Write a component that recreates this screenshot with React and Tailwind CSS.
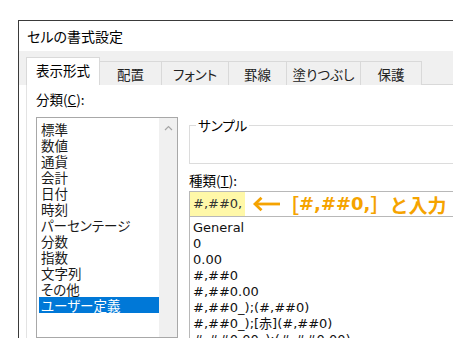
import React from "react";

const font = { fontFamily: '"Noto Sans CJK JP", "Noto Sans", sans-serif' };
const latin = { fontFamily: '"DejaVu Sans", "Noto Sans CJK JP", sans-serif' };

const categories = [
  "標準",
  "数値",
  "通貨",
  "会計",
  "日付",
  "時刻",
  "パーセンテージ",
  "分数",
  "指数",
  "文字列",
  "その他",
  "ユーザー定義",
];

const formats = [
  "General",
  "0",
  "0.00",
  "#,##0",
  "#,##0.00",
  "#,##0_);(#,##0)",
  "#,##0_);[赤](#,##0)",
  "#,##0.00_);(#,##0.00)",
];

const tabs = [
  { label: "表示形式", w: "w-[74px]" },
  { label: "配置", w: "w-[62px]" },
  { label: "フォント", w: "w-[67px]" },
  { label: "罫線", w: "w-[58px]" },
  { label: "塗りつぶし", w: "w-[74px]" },
  { label: "保護", w: "w-[61px]" },
];

export default function App() {
  return (
    <div
      className="w-[458px] h-[344px] bg-white pt-[20px] pl-[18px] overflow-hidden text-[13px] text-[#1a1a1a] [font-feature-settings:'palt']"
      style={font}
    >
      <div className="w-[435px] h-[318px] border-l border-t border-[#3a3a3a] bg-white flex flex-col overflow-hidden">
        {/* title */}
        <div className="h-[30px] flex items-center pl-[8px] text-[14px] text-black shrink-0">
          セルの書式設定
        </div>
        {/* tabs */}
        <div className="h-[34px] bg-[#f0f0f0] flex items-end pl-[7px] shrink-0">
          {tabs.map((t, i) =>
            i === 0 ? (
              <div
                key={t.label}
                className={`${t.w} h-[28px] bg-white border-t border-l border-r border-[#d9d9d9] flex items-center justify-center text-[13.5px] text-black leading-none pb-[2px]`}
              >
                {t.label}
              </div>
            ) : (
              <div
                key={t.label}
                className={`${t.w} h-[24px] bg-[#f0f0f0] border-t border-r border-[#d9d9d9] flex items-center justify-center text-[13.5px] text-[#222] leading-none pt-[2px]`}
              >
                {t.label}
              </div>
            )
          )}
          <div className="flex-1 h-[1px] bg-[#d9d9d9]" />
        </div>
        {/* panel */}
        <div className="flex-1 flex bg-white min-h-0">
          <div className="w-[7px] shrink-0" />
          <div className="flex-1 bg-white border-l border-[#e3e3e3] flex items-start pl-[9px] min-h-0 overflow-hidden">
            {/* left column */}
            <div className="w-[142px] shrink-0 flex flex-col pt-[6px] h-full">
              <div className="leading-[16px] text-[13.5px] text-black">
                分類(<span className="underline">C</span>):
              </div>
              <div className="mt-[10px] flex-1 border border-[#a8a8a8] flex">
                <div className="flex-1 pt-[3px] pl-[2px]">
                  {categories.map((c, i) => (
                    <div
                      key={c}
                      className={`h-[16px] leading-[16px] pl-[2px] whitespace-nowrap text-[13.5px] ${
                        i === categories.length - 1
                          ? "bg-[#0078d7] text-white"
                          : "text-[#1a1a1a]"
                      }`}
                    >
                      {c}
                    </div>
                  ))}
                </div>
                <div className="w-[18px] bg-[#f0f0f0] flex justify-center pt-[7px]">
                  <svg width="9" height="6" viewBox="0 0 9 6">
                    <path d="M1 5 L4.5 1.5 L8 5" fill="none" stroke="#a6a6a6" strokeWidth="1.2" />
                  </svg>
                </div>
              </div>
            </div>
            {/* right column */}
            <div className="ml-[11px] w-[300px] shrink-0 flex flex-col pt-[32px]">
              <fieldset className="border border-[#dcdcdc] h-[47px]">
                <legend className="ml-[6px] px-[2px] leading-[16px] text-[13.5px] text-black">
                  サンプル
                </legend>
              </fieldset>
              <div className="mt-[8px] leading-[16px] text-[13.5px] text-black">
                種類(<span className="underline">T</span>):
              </div>
              <div className="mt-[3px] h-[25px] border border-[#b8b8b8] border-b-0 flex items-stretch">
                <div
                  className="bg-[#fff8a8] w-[55px] flex items-center pl-[3px] text-[13px] text-[#333]"
                  style={latin}
                >
                  #,##0,
                </div>
                <div className="flex items-center pl-[7px] text-[#f5a300] font-bold text-[19px] whitespace-nowrap leading-none [font-feature-settings:normal]">
                  <svg width="28" height="16" viewBox="0 0 28 16" className="shrink-0">
                    <path d="M3 8 H28" stroke="#f5a300" strokeWidth="2.8" />
                    <path d="M9.5 1.8 L3 8 L9.5 14.2" fill="none" stroke="#f5a300" strokeWidth="2.8" />
                  </svg>
                  <span>［</span>
                  <span className="text-[18px]" style={latin}>#,##0,</span>
                  <span>］</span>
                  <span>と入力</span>
                </div>
              </div>
              <div className="border border-[#b8b8b8] pt-[3px] pl-[3px] h-[200px]">
                {formats.map((f) => (
                  <div
                    key={f}
                    className="h-[16px] leading-[16px] whitespace-nowrap text-[13px] text-[#111]"
                    style={latin}
                  >
                    {f}
                  </div>
                ))}
              </div>
            </div>
          </div>
        </div>
      </div>
    </div>
  );
}
